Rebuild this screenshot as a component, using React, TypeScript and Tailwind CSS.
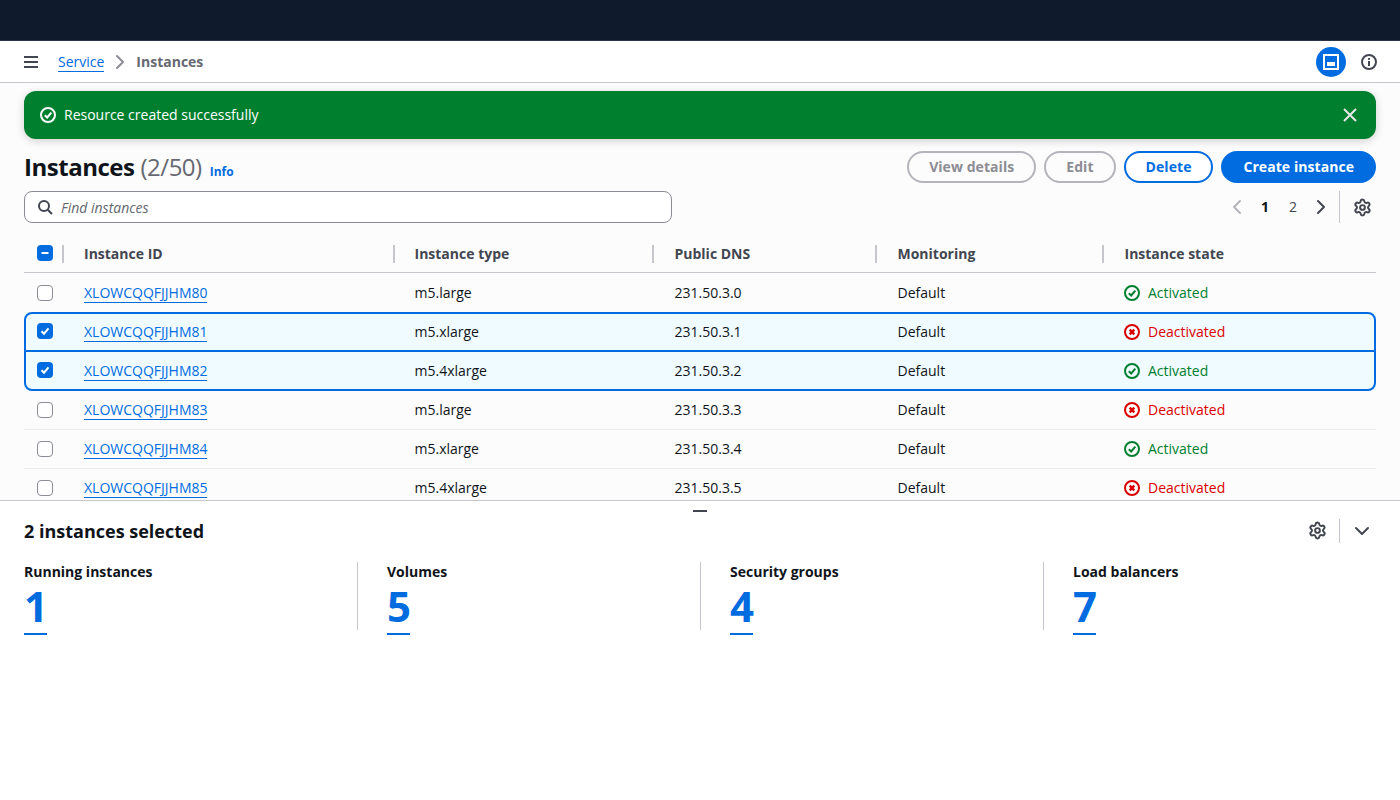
import React from "react";
import { Settings } from "lucide-react";

function Gear() {
  return (
    <span className="flex items-center justify-center w-4 h-4">
      <Settings size={19} strokeWidth={2.5} color="#424650" className="shrink-0" />
    </span>
  );
}

function Chevron({ dir, color = "#424650" }: { dir: "left" | "right" | "down"; color?: string }) {
  const d = dir === "left" ? "M11 2 5 8l6 6" : dir === "right" ? "M5 2l6 6-6 6" : "M2 5l6 6 6-6";
  return (
    <svg width="16" height="16" viewBox="0 0 16 16" fill="none" stroke={color} strokeWidth="2" strokeLinecap="round" strokeLinejoin="round">
      <path d={d} />
    </svg>
  );
}

function Status({ ok }: { ok: boolean }) {
  const c = ok ? "#00802f" : "#db0000";
  return (
    <span className={`flex items-center gap-2 -ml-[0.5px] ${ok ? "text-[#00802f]" : "text-[#db0000]"}`}>
      <svg width="16" height="16" viewBox="0 0 16 16" fill="none" stroke={c} strokeWidth="2">
        <circle cx="8" cy="8" r="7" />
        {ok ? <path d="M4.800 8.200 7.200 10.500 11.300 5.700" /> : <path d="M5.700 5.700l4.600 4.600M10.300 5.700l-4.600 4.600" strokeWidth="2.400" />}
      </svg>
      {ok ? "Activated" : "Deactivated"}
    </span>
  );
}

function Checkbox({ state }: { state: "off" | "on" | "mixed" }) {
  if (state === "off") return <span className="block w-4 h-4 rounded-[4px] border border-[#8c8c94] bg-white" />;
  return (
    <span className="flex items-center justify-center w-4 h-4 rounded-[4px] bg-[#006ce0] -mt-0.5">
      <svg width="12" height="12" viewBox="0 0 12 12" fill="none" stroke="#fff" strokeWidth="2">
        {state === "on" ? <path d="M2.500 6.200 5 8.700 9.500 3.300" /> : <path d="M2.500 6h7" />}
      </svg>
    </span>
  );
}

const colWidths = ["w-[330.5px]", "w-[260px]", "w-[223px]", "w-[227px]", "flex-1"];
const headers = ["Instance ID", "Instance type", "Public DNS", "Monitoring", "Instance state"];

const rows = [
  { id: "XLOWCQQFJJHM80", type: "m5.large", dns: "231.50.3.0", ok: true, sel: false },
  { id: "XLOWCQQFJJHM81", type: "m5.xlarge", dns: "231.50.3.1", ok: false, sel: true },
  { id: "XLOWCQQFJJHM82", type: "m5.4xlarge", dns: "231.50.3.2", ok: true, sel: true },
  { id: "XLOWCQQFJJHM83", type: "m5.large", dns: "231.50.3.3", ok: false, sel: false },
  { id: "XLOWCQQFJJHM84", type: "m5.xlarge", dns: "231.50.3.4", ok: true, sel: false },
  { id: "XLOWCQQFJJHM85", type: "m5.4xlarge", dns: "231.50.3.5", ok: false, sel: false },
];

const stats = [
  ["Running instances", "1", "w-[334px]"],
  ["Volumes", "5", "w-[314px]"],
  ["Security groups", "4", "w-[314px]"],
  ["Load balancers", "7", "flex-1"],
];

function PillButton({ children, kind }: { children: React.ReactNode; kind: "disabled" | "normal" | "primary" }) {
  const cls =
    kind === "disabled"
      ? "border-[#b4b4bb] text-[#8c8c94] bg-transparent"
      : kind === "normal"
      ? "border-[#006ce0] text-[#006ce0] bg-white"
      : "border-[#006ce0] text-white bg-[#006ce0]";
  return <span className={`flex items-center h-8 px-5 rounded-full border-2 text-sm font-bold tracking-[0.06px] ${cls}`}>{children}</span>;
}

export default function App() {
  return (
    <div className="h-[800px] w-full overflow-hidden flex flex-col bg-white text-sm text-[#0f141a] font-['Open_Sans','Noto_Sans',sans-serif]">
      <div className="h-[41px] shrink-0 bg-[#0f1b2d] border-b border-[#2a3444]" />
      <div className="h-[42px] shrink-0 flex items-center bg-white border-b border-[#c6c6cd] pl-6 pr-[23px]">
        <svg width="14" height="12" viewBox="0 0 14 12" fill="none" stroke="#424650" strokeWidth="2">
          <path d="M0 1h14M0 6h14M0 11h14" />
        </svg>
        <a className="ml-[20px] text-[#006ce0] border-b border-[#006ce0] leading-[19px]">Service</a>
        <span className="mx-2"><Chevron dir="right" color="#8c8c94" /></span>
        <span className="font-bold text-[#656871]">Instances</span>
        <div className="ml-auto flex items-center gap-[15px]">
          <span className="flex items-center justify-center w-[30px] h-[30px] rounded-full bg-[#006ce0]">
            <svg width="16" height="16" viewBox="0 0 16 16" fill="none">
              <rect x="1" y="1" width="14" height="14" stroke="#fff" strokeWidth="2" />
              <rect x="4" y="8" width="8" height="4" fill="#fff" />
            </svg>
          </span>
          <svg width="16" height="16" viewBox="0 0 16 16" fill="none" stroke="#424650" strokeWidth="2">
            <circle cx="8" cy="8" r="7" />
            <path d="M8 7v5M8 4v1.800" />
          </svg>
        </div>
      </div>

      <div className="h-[417px] shrink-0 overflow-hidden bg-[#fcfcfc] px-6 pt-2">
        <div className="h-12 flex items-center pl-4 pr-[18px] rounded-xl bg-[#00802f] text-white shadow-[0_2px_8px_rgba(0,0,0,0.18)]">
          <svg width="16" height="16" viewBox="0 0 16 16" fill="none" stroke="#fff" strokeWidth="2">
            <circle cx="8" cy="8" r="7" />
            <path d="M4.800 8.200 7.200 10.500 11.300 5.700" />
          </svg>
          <span className="ml-2">Resource created successfully</span>
          <svg className="ml-auto" width="16" height="16" viewBox="0 0 16 16" fill="none" stroke="#e8e8ea" strokeWidth="2">
            <path d="M2 2l12 12M14 2 2 14" />
          </svg>
        </div>

        <div className="mt-3 flex items-center justify-between h-8">
          <div className="flex items-baseline">
            <h1 className="text-2xl font-bold tracking-[-0.48px] text-[#0f141a]">Instances</h1>
            <span className="ml-[6px] text-2xl tracking-[-0.48px] text-[#656871]">(2/50)</span>
            <a className="ml-2 text-xs font-bold text-[#006ce0]">Info</a>
          </div>
          <div className="flex items-center gap-2">
            <PillButton kind="disabled">View details</PillButton>
            <PillButton kind="disabled">Edit</PillButton>
            <PillButton kind="normal">Delete</PillButton>
            <PillButton kind="primary">Create instance</PillButton>
          </div>
        </div>

        <div className="mt-2 flex items-center justify-between h-8">
          <div className="w-[648px] h-8 flex items-center rounded-lg border border-[#8c8c94] bg-white pl-3">
            <svg width="16" height="16" viewBox="0 0 16 16" fill="none" stroke="#424650" strokeWidth="2">
              <circle cx="7" cy="7" r="5" />
              <path d="M10.700 10.700 15 15" />
            </svg>
            <span className="ml-2 pt-0.5 italic text-[#656871]">Find instances</span>
          </div>
          <div className="flex items-center">
            <Chevron dir="left" color="#b4b4bb" />
            <span className="ml-4 w-2 text-center font-bold text-[#0f141a]">1</span>
            <span className="ml-5 w-2 text-center text-[#424650]">2</span>
            <span className="ml-4"><Chevron dir="right" /></span>
            <span className="ml-[10px] w-px h-8 bg-[#c6c6cd]" />
            <span className="ml-[14px] mr-[6px]"><Gear /></span>
          </div>
        </div>

        <div className="mt-[13px]">
          <div className="h-[37px] flex items-center border-b border-[#c6c6cd] font-bold text-[#424650]">
            <div className="w-10 shrink-0 pl-[13px] flex items-center relative h-full">
              <Checkbox state="mixed" />
              <span className="absolute right-0 top-[9px] w-0.5 h-[18px] bg-[#c6c6cd]" />
            </div>
            {headers.map((h, i) => (
              <div key={h} className={`${colWidths[i]} shrink-0 h-full flex items-center pl-5 relative`}>
                {h}
                {i < 4 && (
                  <span className={`absolute top-[9px] w-0.5 h-[18px] bg-[#c6c6cd] ${i === 0 ? "right-0" : "right-[0.5px]"}`} />
                )}
              </div>
            ))}
          </div>
          {rows.map((r, idx) => (
            <div key={r.id} className={`h-[39px] flex items-center relative ${r.sel ? "bg-[#f0fbff]" : ""}`}>
              {(idx === 3 || idx === 4) && <span className="absolute left-0 right-0 -bottom-px h-px bg-[#ebebf0]" />}
              {r.sel && (
                <span
                  className={`absolute left-0 right-0 border-2 border-[#006ce0] pointer-events-none ${
                    idx === 1 ? "top-0 bottom-[-1px] rounded-t-lg" : "top-[-1px] bottom-[-1px] rounded-b-lg"
                  }`}
                />
              )}
              <div className="w-10 shrink-0 pl-[13px] relative"><Checkbox state={r.sel ? "on" : "off"} /></div>
              <div className={`${colWidths[0]} shrink-0 pl-5 relative`}>
                <a className="text-[#006ce0] border-b border-[#006ce0]">{r.id}</a>
              </div>
              <div className={`${colWidths[1]} shrink-0 pl-5 relative`}>{r.type}</div>
              <div className={`${colWidths[2]} shrink-0 pl-5 relative`}>{r.dns}</div>
              <div className={`${colWidths[3]} shrink-0 pl-5 relative`}>Default</div>
              <div className={`${colWidths[4]} pl-5 relative`}><Status ok={r.ok} /></div>
            </div>
          ))}
        </div>
      </div>

      <div className="flex-1 relative bg-white border-t border-[#c6c6cd] px-6">
        <span className="absolute left-[693px] top-[9px] w-[14px] h-0.5 bg-[#424650]" />
        <div className="flex items-center justify-between h-[31px] mt-[14px]">
          <h2 className="text-lg font-bold text-[#0f141a]">2 instances selected</h2>
          <div className="flex items-center">
            <Gear />
            <span className="ml-[14px] w-px h-6 bg-[#c6c6cd]" />
            <span className="ml-[14px] mr-[6px]"><Chevron dir="down" /></span>
          </div>
        </div>
        <div className="mt-[16px] flex">
          {stats.map(([label, value, w], i) => (
            <div key={label} className={`h-[68px] ${w} ${i < 3 ? "border-r border-[#c6c6cd] mr-[29px]" : ""}`}>
              <div className="font-bold leading-5">{label}</div>
              <a className="block w-fit text-[42px] leading-[48px] pb-[3px] tracking-[-1.26px] font-bold text-[#006ce0] border-b-2 border-[#006ce0]">{value}</a>
            </div>
          ))}
        </div>
      </div>
    </div>
  );
}
